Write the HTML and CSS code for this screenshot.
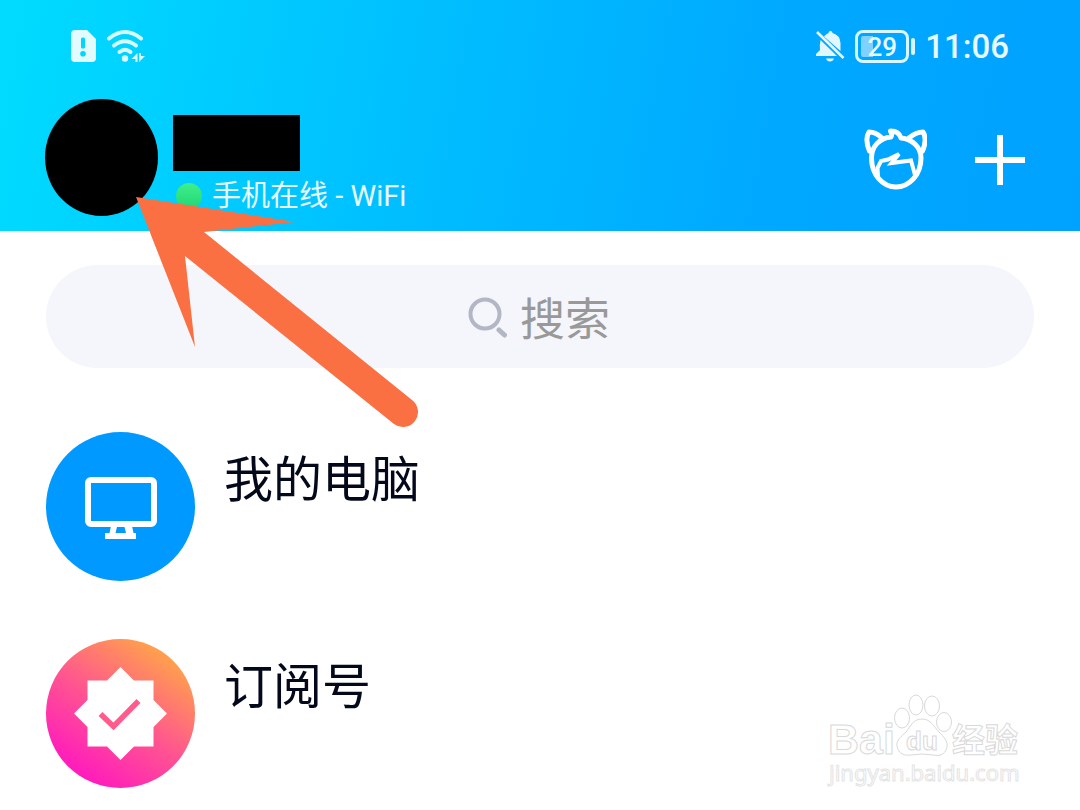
FILE: index.html
```html
<!DOCTYPE html>
<html lang="zh-CN">
<head>
  <meta charset="UTF-8">
  <meta name="viewport" content="width=device-width, initial-scale=1.0">
  <title>消息</title>
  <link rel="stylesheet" href="styles.css">
</head>
<body>

<header class="header">
  <div class="status-bar">
    <div class="status-group">
      <svg class="icon-sim" viewBox="0 0 26 34" aria-hidden="true">
        <path fill="#e2fbff" fill-rule="evenodd" d="M4 1h12l9 9v19a4 4 0 0 1-4 4H4a4 4 0 0 1-4-4V5a4 4 0 0 1 4-4zM11.500 8.500a1.500 1.500 0 0 0-1.500 1.500v8a1.500 1.500 0 0 0 1.500 1.500h1a1.500 1.500 0 0 0 1.500-1.500v-8a1.500 1.500 0 0 0-1.500-1.500zM12 22a2.800 2.800 0 1 0 0 5.600 2.800 2.800 0 0 0 0-5.600z"/>
      </svg>
      <svg class="icon-wifi" viewBox="0 0 38 34" aria-hidden="true">
        <g fill="none" stroke="#d8fbff" stroke-width="4" stroke-linecap="round">
          <path d="M2 9.500Q18 -3.500 34 9.500"/>
          <path d="M7 16.500Q18 8 29 16.500"/>
          <path d="M12.500 23Q18 18.500 23.500 23"/>
        </g>
        <circle cx="18" cy="29.500" r="3.200" fill="#d8fbff"/>
        <path fill="#d8fbff" d="M30.500 24v9h-2v-3h-4zM32 24h2v3h4l-6 6z"/>
      </svg>
    </div>
    <div class="status-group">
      <svg class="icon-bell" viewBox="0 0 30 34" aria-hidden="true">
        <path fill="#e2f6ff" d="M9 7.500Q11 5 13.500 4a2 2 0 0 1 4 0Q25 6 25.500 14v8L9 7.500zM5.500 11 22 27H1v-2l4-4q-.5-6 .5-10zM11 29.500h8q-1 3-4 3t-4-3z"/>
        <path stroke="#e2f6ff" stroke-width="2.600" d="M2 3l26.500 26"/>
      </svg>
      <div class="battery">
        <span class="battery-body">29</span>
        <span class="battery-tip"></span>
      </div>
      <time class="clock">11:06</time>
    </div>
  </div>

  <div class="profile">
    <div class="avatar"></div>
    <div class="profile-info">
      <div class="nickname"></div>
      <div class="online"><span class="online-dot"></span>手机在线 - WiFi</div>
    </div>
    <div class="actions">
      <button class="action" type="button" aria-label="小世界">
        <svg class="icon-cat" viewBox="0 0 64 64" fill="none" stroke="#fff" stroke-linejoin="round" stroke-linecap="round" aria-hidden="true">
          <g stroke-width="5">
            <path d="M19 11Q13 5 6 5 1.500 12 6.500 24"/>
            <path d="M46 11Q53 5 60 5 64.500 12 59.500 24"/>
            <path d="M28 10C17 11 8.500 19 8.500 31 8.500 48 20 60 33 60S58 48 58 31C58 20 49 12 38 11Q36 4 27.500 4 29.500 7 28 10z"/>
          </g>
          <path stroke-width="4" stroke-linejoin="miter" d="M15 49 14.500 41 18 34 25 32.500 36 27 28.500 36 48 33.500 52 48"/>
        </svg>
      </button>
      <button class="action" type="button" aria-label="添加">
        <svg class="icon-plus" viewBox="0 0 50 64" aria-hidden="true">
          <path fill="#fff" d="M22 8h6v22h22v6H28v22h-6V36H0v-6h22z"/>
        </svg>
      </button>
    </div>
  </div>
</header>

<main class="main">
  <label class="search">
    <svg class="icon-search" viewBox="0 0 40 42" fill="none" stroke="#b3b6c4" aria-hidden="true">
      <circle cx="17" cy="18" r="14.500" stroke-width="4"/>
      <path stroke-width="5" stroke-linecap="round" d="M31 34l5.500 5"/>
    </svg>
    <input class="search-input" type="text" placeholder="搜索" aria-label="搜索">
  </label>

  <ul class="chat-list">
    <li>
      <a class="chat" href="#">
        <svg class="chat-icon" viewBox="0 0 149 149" aria-hidden="true">
          <circle cx="74.500" cy="74.500" r="74.500" fill="#0099ff"/>
          <rect x="42" y="48" width="66" height="44" rx="3" fill="none" stroke="#fff" stroke-width="6"/>
          <path fill="#fff" fill-rule="evenodd" d="M65 94h21l1.500 7H90v6H59v-6h4.500zM71 95l-1.500 6H80l-1.500-6z"/>
        </svg>
        <span class="chat-name">我的电脑</span>
      </a>
    </li>
    <li>
      <a class="chat" href="#">
        <svg class="chat-icon" viewBox="0 0 149 149" aria-hidden="true">
          <defs>
            <linearGradient id="pink" x1="0.200" y1="0.950" x2="0.800" y2="0.080">
              <stop offset="0" stop-color="#ff16c1"/>
              <stop offset="0.500" stop-color="#ff5590"/>
              <stop offset="1" stop-color="#ffa34a"/>
            </linearGradient>
          </defs>
          <circle cx="74.500" cy="74.500" r="74.500" fill="url(#pink)"/>
          <path fill="#fff" d="M74.500 28 88 41.500h19.500V61L121 74.500 107.500 88v19.500H88L74.500 121 61 107.500H41.500V88L28 74.500 41.500 61V41.500H61z"/>
          <path fill="none" stroke="#ff5c8d" stroke-width="5.500" d="M54.500 75 67.500 87.500 92.500 62"/>
        </svg>
        <span class="chat-name">订阅号</span>
      </a>
    </li>
  </ul>
</main>

<!-- pointer to the avatar -->
<svg class="arrow" viewBox="0 0 284 232" aria-hidden="true">
  <path fill="#fb7042" d="M0 0 159 25 68 35 276 203A14.500 14.500 0 0 1 258 227L49 59 59 150z"/>
</svg>

<div class="watermark">
  <svg class="watermark-logo" viewBox="0 0 200 100" aria-hidden="true">
    <g fill="#fff" stroke="#d9d9d9">
      <text class="mark-latin" x="4" y="64">Bai</text>
      <ellipse cx="78" cy="28" rx="7.500" ry="10"/>
      <ellipse cx="92" cy="15" rx="7" ry="10"/>
      <ellipse cx="108" cy="16" rx="7.500" ry="10"/>
      <ellipse cx="120" cy="32" rx="7.500" ry="9.500"/>
      <path d="M98 29c9 0 12 8 17 13s9 9 8 15c-2 9-9 9-14 8q-11-2-22 0c-6 1-13-1-14-9-1-6 4-9 9-14 5-6 7-13 16-13z"/>
      <text class="mark-du" x="82" y="60">du</text>
      <text class="mark-cjk" x="128" y="62">经验</text>
      <text class="mark-url" x="5" y="91">jingyan.baidu.com</text>
    </g>
  </svg>
</div>

</body>
</html>
```
FILE: styles.css
```css
* {
  box-sizing: border-box;
}

body {
  position: relative;
  margin: 0;
  min-height: 100vh;
  background-color: #fff;
  font-family: Roboto, "Noto Sans CJK SC", sans-serif;
  color: #03081a;
}

svg {
  display: block;
}

/* Header */
.header {
  padding: 28px 55px 15px 45px;
  background: linear-gradient(100deg, #00dcff 0%, #00bfff 38%, #00a8ff 72%, #00a2ff 100%);
  color: #e8faff;
}

.status-bar {
  display: flex;
  justify-content: space-between;
  align-items: center;
  height: 36px;
  padding: 0 16px 0 26px;
}

.status-group {
  display: flex;
  align-items: center;
  gap: 10px;
}

.icon-sim {
  width: 26px;
  height: 34px;
}

.icon-wifi {
  width: 38px;
  height: 34px;
}

.icon-bell {
  width: 30px;
  height: 34px;
}

.battery {
  display: flex;
  align-items: center;
  gap: 2px;
}

.battery-body {
  width: 54px;
  height: 33px;
  border: 3px solid #d8f6ff;
  border-radius: 8px;
  background: linear-gradient(90deg, #7fd1ff 12px, transparent 12px) content-box;
  padding: 3px;
  font-size: 26px;
  font-weight: 500;
  line-height: 22px;
  text-align: center;
}

.battery-tip {
  width: 4px;
  height: 17px;
  border-radius: 2px;
  background-color: #d8f6ff;
}

.clock {
  padding-top: 2px;
  font-size: 33px;
  font-weight: 500;
  line-height: 36px;
}

.profile {
  display: flex;
  align-items: flex-start;
  margin-top: 35px;
}

.avatar {
  width: 113px;
  height: 117px;
  border-radius: 50%;
  background-color: #000;
}

.profile-info {
  margin-left: 15px;
  padding-top: 16px;
}

.nickname {
  width: 127px;
  height: 56px;
  background-color: #000;
}

.online {
  display: flex;
  align-items: center;
  gap: 10px;
  margin-top: 6px;
  padding-left: 3px;
  font-size: 29px;
  line-height: 38px;
}

.online-dot {
  width: 26px;
  height: 26px;
  border-radius: 50%;
  background: linear-gradient(#3df08a, #22d676);
}

.actions {
  display: flex;
  gap: 48px;
  margin-left: auto;
  padding-top: 28px;
}

.action {
  padding: 0;
  border: none;
  background: none;
  cursor: pointer;
}

.icon-cat {
  width: 64px;
  height: 64px;
}

.icon-plus {
  width: 50px;
  height: 64px;
}

/* Search */
.main {
  padding: 34px 46px 22px;
}

.search {
  display: flex;
  justify-content: center;
  align-items: center;
  gap: 12px;
  height: 103px;
  border-radius: 52px;
  background-color: #f4f6fb;
}

.icon-search {
  width: 40px;
  height: 42px;
}

.search-input {
  width: 92px;
  padding: 8px 0 0;
  border: none;
  outline: none;
  background: none;
  font-family: inherit;
  font-size: 45px;
  line-height: 60px;
  color: #03081a;
}

.search-input::placeholder {
  color: #999;
}

/* Chats */
.chat-list {
  display: flex;
  flex-direction: column;
  gap: 58px;
  margin: 64px 0 0;
  padding: 0;
  list-style: none;
}

.chat {
  display: flex;
  align-items: flex-start;
  gap: 29px;
  color: inherit;
  text-decoration: none;
}

.chat-icon {
  width: 149px;
  height: 149px;
}

.chat-name {
  padding-top: 19px;
  font-size: 49px;
  line-height: 60px;
}

/* Overlays */
.arrow {
  position: absolute;
  top: 197px;
  left: 136px;
  width: 284px;
  height: 232px;
  pointer-events: none;
}

.watermark {
  position: absolute;
  right: 56px;
  bottom: 20px;
  pointer-events: none;
}

.watermark-logo {
  width: 200px;
  height: 100px;
}

.mark-latin {
  font: bold 43px "Liberation Sans", sans-serif;
}

.mark-du {
  font: bold 26px "Liberation Sans", sans-serif;
}

.mark-cjk {
  font: bold 33px "Noto Sans CJK SC", sans-serif;
}

.mark-url {
  font: 22px "Noto Sans", sans-serif;
  stroke: #e4e4e4;
}
```
